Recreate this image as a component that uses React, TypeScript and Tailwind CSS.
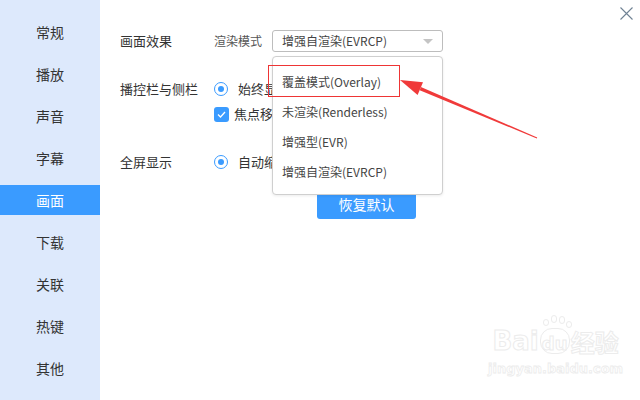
import React from "react";

const font = { fontFamily: '"Noto Sans CJK SC", "Microsoft YaHei", sans-serif' };

const navItems = ["常规", "播放", "声音", "字幕", "画面", "下载", "关联", "热键", "其他"];

function Radio() {
  return (
    <span className="flex h-[14px] w-[14px] shrink-0 items-center justify-center rounded-full border-[1.5px] border-[#3a9bff] bg-white">
      <span className="h-[6px] w-[6px] rounded-full bg-[#3a9bff]" />
    </span>
  );
}

function Checkbox() {
  return (
    <span className="flex h-[15px] w-[15px] shrink-0 items-center justify-center rounded-[3px] bg-[#3a9bff]">
      <svg width="9" height="7" viewBox="0 0 9 7">
        <path d="M1 3.5 L3.5 6 L8 1" fill="none" stroke="#fff" strokeWidth="1.3" />
      </svg>
    </span>
  );
}

export default function App() {
  return (
    <div className="relative flex h-[400px] w-[640px] overflow-hidden bg-white" style={font}>
      {/* sidebar */}
      <div className="flex w-[100px] shrink-0 flex-col gap-[12px] bg-[#dde9fc] pt-[17px]">
        {navItems.map((n) => (
          <div
            key={n}
            className={
              n === "画面"
                ? "flex h-[30px] items-center justify-center bg-[#3a9bff] text-[14px] text-white"
                : "flex h-[30px] items-center justify-center text-[14px] text-[#333]"
            }
          >
            {n}
          </div>
        ))}
      </div>

      {/* main */}
      <div className="relative flex-1 pl-[20px] pt-[30px] text-[#333]">
        {/* row 1 */}
        <div className="flex h-[22px] items-center">
          <div className="w-[94px] text-[13px]">画面效果</div>
          <div className="w-[58px] text-[12px] text-[#555]">渲染模式</div>
          <div className="relative flex h-[22px] w-[171px] items-center rounded-[3px] border border-[#bdbdbd] pl-[9px] text-[12px] text-[#444]">
            增强自渲染(EVRCP)
            <svg className="absolute right-[9px] top-[8px]" width="10" height="5" viewBox="0 0 10 5">
              <path d="M0 0 L10 0 L5 5 Z" fill="#c4c4c4" />
            </svg>
          </div>
        </div>

        {/* row 2 */}
        <div className="mt-[28px] flex h-[18px] items-center">
          <div className="w-[94px] shrink-0 text-[13px]">播控栏与侧栏</div>
          <Radio />
          <span className="ml-[10px] w-[34px] overflow-hidden whitespace-nowrap text-[13px]">始终显示</span>
        </div>
        <div className="mt-[7px] flex h-[18px] items-center pl-[94px]">
          <Checkbox />
          <span className="ml-[5px] w-[38px] overflow-hidden whitespace-nowrap text-[13px]">焦点移出后自动隐藏</span>
        </div>

        {/* row 3 */}
        <div className="mt-[30px] flex h-[18px] items-center">
          <div className="w-[94px] shrink-0 text-[13px]">全屏显示</div>
          <Radio />
          <span className="ml-[10px] w-[34px] overflow-hidden whitespace-nowrap text-[13px]">自动缩放</span>
        </div>

        {/* button */}
        <div className="mt-[18px] pl-[197px]">
          <button className="flex h-[30px] w-[99px] items-center justify-center rounded-[3px] bg-[#3a9bff] text-[14px] text-white">
            恢复默认
          </button>
        </div>

        {/* dropdown */}
        <div className="absolute left-[172px] top-[56px] w-[171px] rounded-[4px] border border-[#cfcfcf] bg-white pb-[7px] pt-[10px] text-[12px] text-[#444] shadow-[0_1px_3px_rgba(0,0,0,0.08)]">
          {["覆盖模式(Overlay)", "未渲染(Renderless)", "增强型(EVR)", "增强自渲染(EVRCP)"].map((t) => (
            <div key={t} className="flex h-[30px] items-center pl-[9px]">
              {t}
            </div>
          ))}
        </div>

        {/* red highlight */}
        <div className="absolute left-[168px] top-[65px] h-[32px] w-[132px] border border-[#ee3535]" />
      </div>

      {/* close */}
      <svg className="absolute left-[620px] top-[7px]" width="13" height="13" viewBox="0 0 13 13">
        <path d="M0.5 0.5 L12.5 12.5 M12.5 0.5 L0.5 12.5" stroke="#6f8294" strokeWidth="1.1" />
      </svg>

      {/* red arrow */}
      <svg className="pointer-events-none absolute left-0 top-0" width="640" height="400" viewBox="0 0 640 400">
        <polygon points="537.2,137.5 536.8,138.5 419.7,90.2 420.9,87.0" fill="#f03a3a" />
        <polygon points="400,80 423,82.2 417.6,95" fill="#f03a3a" />
      </svg>

      {/* watermark */}
      <div className="pointer-events-none absolute left-[488px] top-[328px] flex flex-col items-center" style={{ fontFamily: '"DejaVu Sans", "Noto Sans CJK SC", sans-serif' }}>
        <div className="flex items-end text-[26px] font-bold leading-none text-white [-webkit-text-stroke:1px_#ececec]">
          <span>Bai</span>
          <span className="relative mx-[1px] flex h-[26px] w-[30px] items-end justify-center rounded-[12px] border border-[#ececec] text-[18px]">
            du
            <span className="absolute -top-[10px] left-[2px] h-[7px] w-[6px] rounded-full border border-[#ececec]" />
            <span className="absolute -top-[14px] left-[10px] h-[8px] w-[6px] rounded-full border border-[#ececec]" />
            <span className="absolute -top-[13px] left-[18px] h-[8px] w-[6px] rounded-full border border-[#ececec]" />
            <span className="absolute -top-[8px] left-[25px] h-[7px] w-[6px] rounded-full border border-[#ececec]" />
          </span>
          <span className="text-[24px]" style={{ fontFamily: '"Noto Sans CJK SC", sans-serif' }}>经验</span>
        </div>
        <div className="mt-[8px] text-[13px] font-bold leading-none text-white [-webkit-text-stroke:0.8px_#ececec]">
          jingyan.baidu.com
        </div>
      </div>
    </div>
  );
}
